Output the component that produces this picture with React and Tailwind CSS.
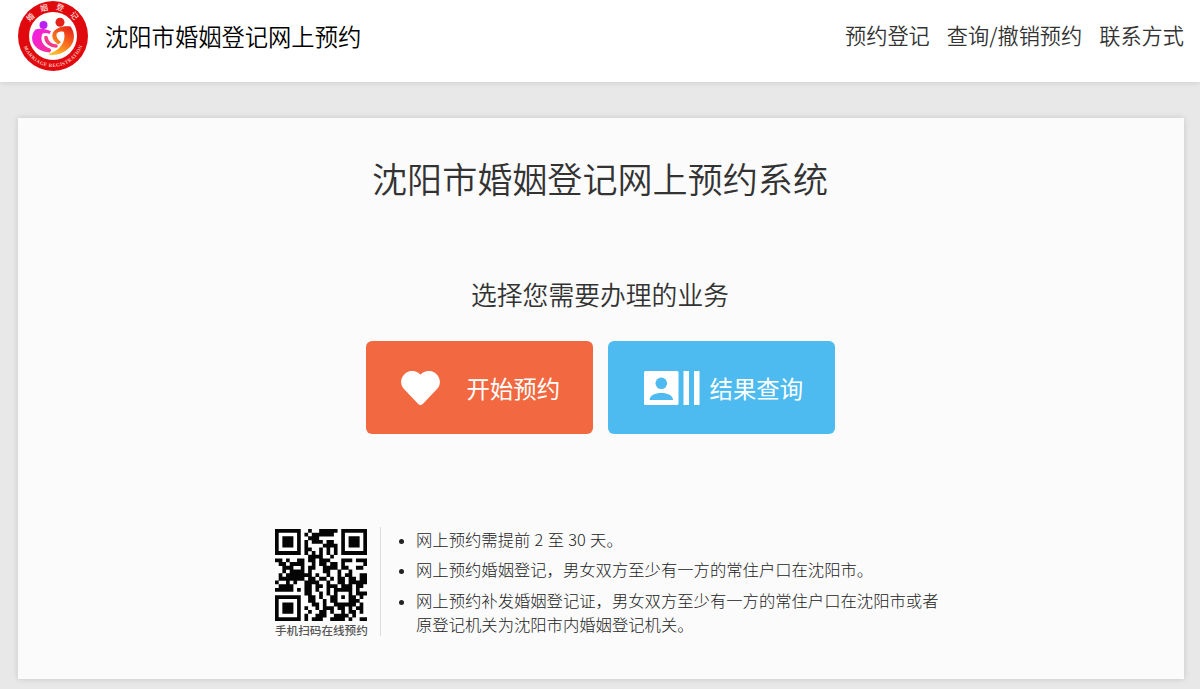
import React from "react";

const QR_ROWS = [
  "#######..#..#####.#######",
  "#.....#.#.######..#.....#",
  "#.###.#..###......#.###.#",
  "#.###.#.#.###.##..#.###.#",
  "#.###.#.#....####.#.###.#",
  "#.....#.##..#.#.#.#.....#",
  "#######.#.#.#.#.#.#######",
  ".........####..#.........",
  "##.#..##.##.###...###.###",
  ".##.####..#.##.##.#.....#",
  "..###..#.##..####.##..##.",
  "..#.####.#...##..#..#....",
  ".#.#######.#..#..#.##..##",
  ".#######.##.##.#.##.##.##",
  "#..#.#..####..#..##.#####",
  ".####...##.##.###.###.##.",
  "#####.#.##.#..#.#####.#..",
  "........##..#.#.#...#.###",
  "#######..##.#..##.#.##.#.",
  "#.....#..##..#.##...###..",
  "#.###.#...##.#..######.#.",
  "#.###.#.#..#.###.##.#.##.",
  "#.###.#..#..##.#..#.##.#.",
  "#.....#.#..###..####.#...",
  "#######.#.###..####.#..##",
];

const QR_PATH = QR_ROWS.map((row, y) =>
  [...row.matchAll(/#+/g)].map((m) => `M${m.index} ${y}h${m[0].length}v1.04h-${m[0].length}z`).join("")
).join("");

function QrCode() {
  return (
    <svg className="block h-[92px] w-[92px] shrink-0" viewBox="0 0 25 25">
      <rect width="25" height="25" fill="#fff" />
      <path d={QR_PATH} fill="#050505" />
    </svg>
  );
}

function Logo() {
  return (
    <svg className="block h-[70px] w-[70px] shrink-0" viewBox="0 0 70 70">
      <defs>
        <linearGradient id="left" x1="0" y1="0" x2="1" y2="1">
          <stop offset="0" stopColor="#f01cf0" />
          <stop offset="1" stopColor="#fb2f8c" />
        </linearGradient>
        <linearGradient id="right" x1="0.8" y1="0" x2="0.2" y2="1">
          <stop offset="0" stopColor="#e8201a" />
          <stop offset="0.5" stopColor="#f8701c" />
          <stop offset="1" stopColor="#ffc22c" />
        </linearGradient>
        <path id="top-arc" d="M9 30 A26.5 26.5 0 0 1 61 30" />
        <path id="bottom-arc" d="M4 35 A31 31 0 0 0 66 35" />
      </defs>
      <circle cx="35" cy="35" r="35" fill="#e00a0e" />
      <circle cx="35" cy="35" r="24" fill="#fff" />
      <text fill="#ffdcd8" fontSize="7.8" fontWeight="500" fontFamily="'Noto Sans CJK SC', sans-serif" letterSpacing="7">
        <textPath href="#top-arc" startOffset="9">婚姻登记</textPath>
      </text>
      <text fill="#ffc0bb" fontSize="5" fontWeight="bold" fontFamily="'Liberation Serif', serif">
        <textPath href="#bottom-arc" startOffset="11" textLength="76">MARRIAGE REGISTRATION</textPath>
      </text>
      <circle cx="25.5" cy="24" r="4" fill="#ba20f4" />
      <circle cx="42" cy="21.3" r="4.5" fill="#e5201b" />
      <path d="M17.5 28.5 C10 37 15 50 31.5 51.5 C33.5 50.5 33.5 48.5 32 47.5 C25 45.5 21.5 39 24.5 32.5 C27 31.5 29 31.8 31.5 33 L33 30.2 C28 27.5 21.5 27 17.5 28.5Z" fill="url(#left)" />
      <path d="M28 36.5 C28.5 41.5 33 45 38 45" fill="none" stroke="#f93a86" strokeWidth="3.6" strokeLinecap="round" />
      <path d="M52.5 25.5 C60 36 55 49 40 53.3 C35 54.5 31.5 54 30.5 53 C41 49.5 48.5 42 46 31 C42 30 39.5 31 38.5 33 C38 36 40 39 43 41 L40.5 43.5 C36 41 33.5 37 34.5 33 C36.5 27 45 24.5 52.5 25.5Z" fill="url(#right)" />
    </svg>
  );
}

function HeartIcon() {
  return (
    <svg className="block h-[34px] w-[39px]" viewBox="0 0 39 34">
      <path d="M19.5 3.8 C15.6 -1.2 8 -1.2 3.7 2.9 C-.8 7.2 -1.1 13.6 3 18.1 L17 32.8 Q19.5 35.2 22 32.8 L36 18.1 C40.1 13.6 39.8 7.2 35.3 2.9 C31 -1.2 23.4 -1.2 19.5 3.8Z" fill="#fff" />
    </svg>
  );
}

function ContactIcon() {
  return (
    <svg className="block h-[34px] w-[56px]" viewBox="0 0 56 34">
      <rect width="34.5" height="34" rx="1.5" fill="#fff" />
      <circle cx="17.3" cy="12.3" r="5.8" fill="#4dbbef" />
      <path d="M5.6 29 C5.6 24.5 11 22 17.3 22 C23.6 22 29 24.5 29 29Z" fill="#4dbbef" />
      <rect x="39.5" width="5.5" height="34" fill="#fff" />
      <rect x="50" width="5.5" height="34" fill="#fff" />
    </svg>
  );
}

export default function App() {
  return (
    <div className="flex h-[689px] w-full flex-col overflow-hidden bg-[#e8e8e8] font-['Noto_Sans_CJK_SC',sans-serif] font-[350] text-[#333]">
      <header className="flex h-[82px] shrink-0 items-start justify-between bg-white pr-4 pl-[18px] shadow-[0_0_6px_rgba(0,0,0,0.15)]">
        <div className="flex items-center gap-[17px] pt-px">
          <Logo />
          <h1 className="text-[23.3px] leading-[34px] whitespace-nowrap text-black">沈阳市婚姻登记网上预约</h1>
        </div>
        <nav className="flex gap-[17px] pt-[18px] text-[21.2px] leading-[34px] whitespace-nowrap">
          <a>预约登记</a>
          <a>查询/撤销预约</a>
          <a>联系方式</a>
        </nav>
      </header>

      <main className="mt-9 mr-4 ml-[18px] flex h-[561px] shrink-0 flex-col items-center bg-[#fbfbfb] pr-[2px] shadow-[0_0_6px_rgba(0,0,0,0.15)]">
        <h2 className="mt-[34px] text-[35.1px] leading-[52px] whitespace-nowrap">沈阳市婚姻登记网上预约系统</h2>
        <h3 className="mt-[71px] text-[25.8px] leading-[38px] whitespace-nowrap">选择您需要办理的业务</h3>

        <div className="mt-[28px] flex gap-[15px] text-[23.4px] font-normal text-white">
          <button className="flex h-[93px] w-[227px] items-center rounded-[6px] bg-[#f26840] pl-[35px]">
            <HeartIcon />
            <span className="ml-[27px] pt-px leading-8">开始预约</span>
          </button>
          <button className="flex h-[93px] w-[227px] items-center rounded-[6px] bg-[#4dbbef] pl-9">
            <ContactIcon />
            <span className="ml-[10px] pt-px leading-8">结果查询</span>
          </button>
        </div>

        <section className="mt-[93px] flex w-[652px]">
          <div className="flex h-[109px] w-[107px] shrink-0 flex-col border-r border-[#ddd] pt-[2px] pl-px">
            <QrCode />
            <p className="mt-px text-[11.6px] leading-[16px] font-medium whitespace-nowrap text-[#555]">手机扫码在线预约</p>
          </div>
          <ul className="ml-[35px] w-[530px] list-disc space-y-[6px] text-[16.33px] leading-[24.4px] font-light whitespace-nowrap text-[#222] [word-spacing:0.7px] marker:text-[14px]">
            <li>网上预约需提前 2 至 30 天。</li>
            <li>网上预约婚姻登记，男女双方至少有一方的常住户口在沈阳市。</li>
            <li>
              网上预约补发婚姻登记证，男女双方至少有一方的常住户口在沈阳市或者
              <br />
              原登记机关为沈阳市内婚姻登记机关。
            </li>
          </ul>
        </section>
      </main>
    </div>
  );
}
